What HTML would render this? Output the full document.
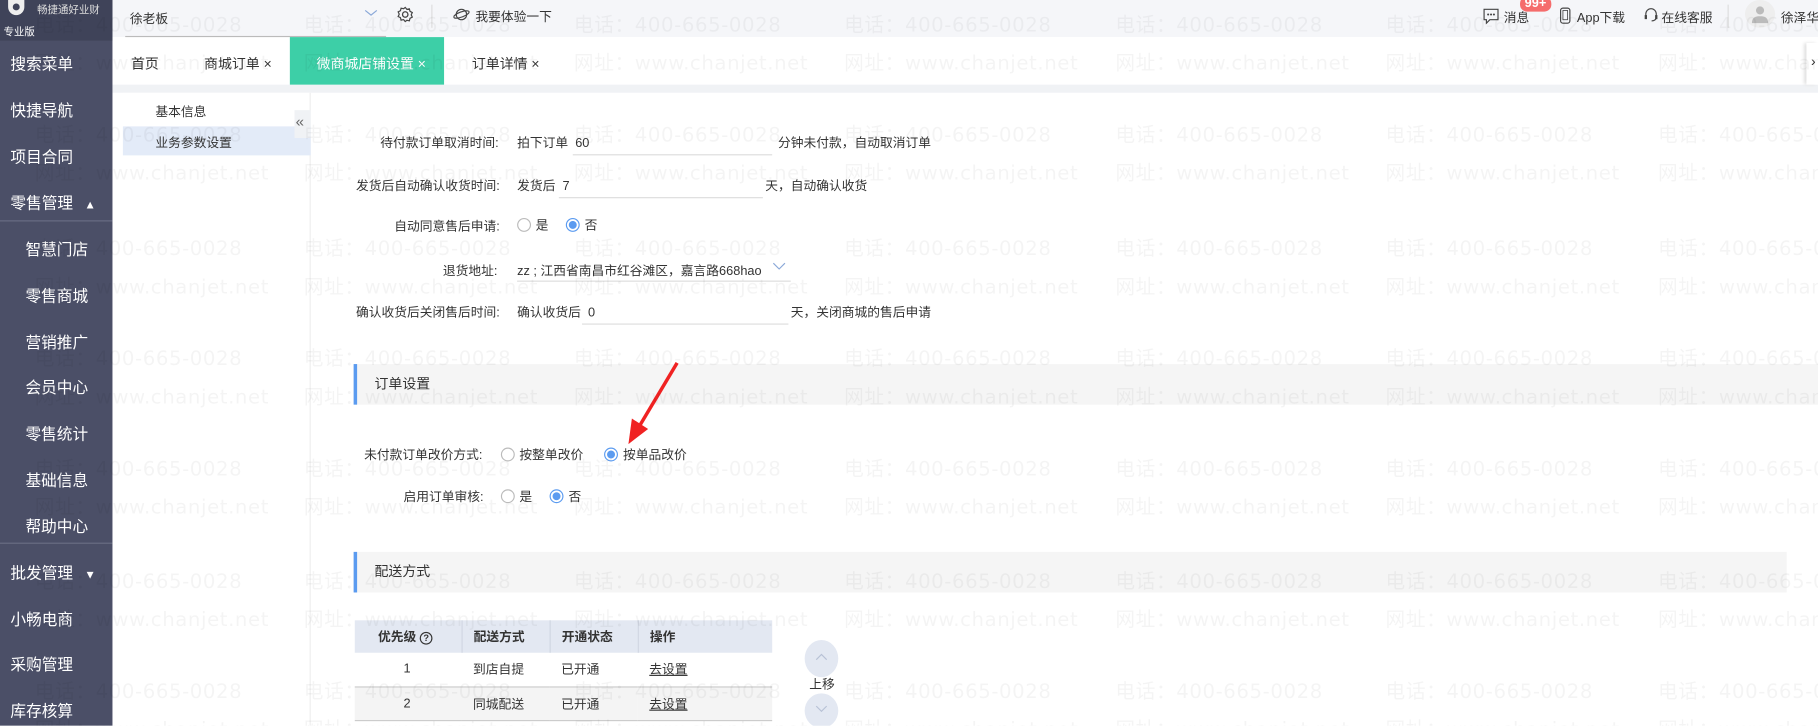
<!DOCTYPE html>
<html><head><meta charset="utf-8"><style>
*{margin:0;padding:0;box-sizing:border-box}
html,body{width:1818px;height:726px;overflow:hidden;background:#fff}
#w{position:absolute;left:0;top:0;width:1568px;height:626px;transform:scale(1.15944);transform-origin:0 0;font-family:"Liberation Sans","Noto Sans CJK SC",sans-serif;color:#333;font-size:11px;overflow:hidden}
.a{position:absolute;white-space:nowrap}
.side{position:absolute;left:0;top:0;width:97px;height:626px;background:#4b4f67;color:#fff}
.side .a{font-size:13.5px}
.top{position:absolute;left:97px;top:0;right:0;height:32px;background:#f5f6f9}
.tabs{position:absolute;left:97px;top:32px;right:0;height:41px;background:#fff}
.strip{position:absolute;left:97px;top:73px;right:0;height:7px;background:#f0f2f5}
.sub{position:absolute;left:106px;top:80px;width:162px;height:546px;background:#fff;border-right:1px solid #eee}
#wms{position:absolute;left:0;top:0;width:1568px;height:626px;z-index:5;pointer-events:none}
.wm{position:absolute;color:rgba(0,0,0,0.045);font-family:"DejaVu Sans","Noto Sans CJK SC",sans-serif;font-size:17px;white-space:nowrap;line-height:20px;letter-spacing:0.5px}
.radio{display:inline-block;width:12px;height:12px;border:1px solid #bbb;border-radius:50%;vertical-align:-2px;margin-right:4px;background:#fff}
.radio.on{border-color:#5b9bf0;background:radial-gradient(circle,#5b9bf0 3.2px,#fff 3.6px)}
.inp{position:absolute;border-bottom:1px solid #ddd;height:22px}
.sec{position:absolute;left:305px;height:35px;background:#f5f5f5;border-left:3px solid #5b9bf0;font-size:12px;line-height:35px;padding-left:15px}
table{position:absolute;left:306px;top:535px;width:360px;border-collapse:collapse;font-size:11px}
th{background:#e3e8f2;height:28px;font-weight:bold;text-align:left;padding-left:10px;border-right:1px solid #d0d6e2}
td{height:29px;padding-left:10px;border-bottom:1px solid #ccc}
</style></head><body><div id="w">
<div class="top"></div>
<div class="tabs"></div>
<div class="strip"></div>
<div class="sub"></div>

<div class="side">
<div style="position:absolute;left:0;top:0;width:97px;height:35px;background:#3f4359"></div>
<svg class="a" style="left:5px;top:0" width="18" height="16" viewBox="0 0 18 16"><path d="M2 0h14v6a7 7 0 0 1-14 0z" fill="#eee"/><circle cx="9" cy="6" r="3" fill="#3f4359"/></svg>
<div class="a" style="left:32px;top:1px;font-size:9px!important;color:#ddd">畅捷通好业财</div>
<div class="a" style="left:3px;top:20px;font-size:9px!important">专业版</div>
<div class="a" style="left:9px;top:44px">搜索菜单</div>
<div class="a" style="left:9px;top:84px">快捷导航</div>
<div class="a" style="left:9px;top:124px">项目合同</div>
<div class="a" style="left:9px;top:164px">零售管理 <span style="font-size:10px;margin-left:6px">▲</span></div>
<div style="position:absolute;left:0;top:190px;width:97px;height:1px;background:#6a6e84"></div>
<div class="a" style="left:22px;top:204px">智慧门店</div>
<div class="a" style="left:22px;top:244px">零售商城</div>
<div class="a" style="left:22px;top:284px">营销推广</div>
<div class="a" style="left:22px;top:323px">会员中心</div>
<div class="a" style="left:22px;top:363px">零售统计</div>
<div class="a" style="left:22px;top:403px">基础信息</div>
<div class="a" style="left:22px;top:443px">帮助中心</div>
<div style="position:absolute;left:0;top:468px;width:97px;height:1px;background:#6a6e84"></div>
<div class="a" style="left:9px;top:483px">批发管理 <span style="font-size:10px;margin-left:6px">▼</span></div>
<div class="a" style="left:9px;top:523px">小畅电商</div>
<div class="a" style="left:9px;top:562px">采购管理</div>
<div class="a" style="left:9px;top:602px">库存核算</div>
</div>

<div class="a" style="left:112px;top:8px;font-size:11px">徐老板</div>
<div style="position:absolute;left:108px;top:31px;width:225px;height:1px;background:#bbb"></div>
<svg class="a" style="left:314px;top:6px" width="12" height="10"><path d="M1 3l5 4 5-4" stroke="#8aa8d8" fill="none"/></svg>
<svg class="a" style="left:342px;top:5px" width="15" height="15" viewBox="0 0 16 16"><circle cx="8" cy="8" r="2.5" fill="none" stroke="#444" stroke-width="1.2"/><path d="M8 1.5l1.5 1.8 2.3-.5.6 2.3 2.1 1.1-1 2.1 1 2.1-2.1 1.1-.6 2.3-2.3-.5L8 14.5l-1.5-1.8-2.3.5-.6-2.3-2.1-1.1 1-2.1-1-2.1 2.1-1.1.6-2.3 2.3.5z" fill="none" stroke="#444" stroke-width="1.1"/></svg>
<div style="position:absolute;left:372px;top:4px;width:1px;height:20px;background:#ddd"></div>
<svg class="a" style="left:391px;top:6px" width="14" height="13" viewBox="0 0 14 13"><circle cx="7" cy="6.5" r="4.5" fill="none" stroke="#444"/><ellipse cx="7" cy="6.5" rx="7" ry="2.2" transform="rotate(-20 7 6.5)" fill="none" stroke="#444"/></svg>
<div class="a" style="left:410px;top:6px">我要体验一下</div>
<svg class="a" style="left:1279px;top:7px" width="14" height="14" viewBox="0 0 14 14"><path d="M1 1h12v9H6l-3 3v-3H1z" fill="none" stroke="#444"/><circle cx="4.5" cy="5.5" r=".9" fill="#444"/><circle cx="7" cy="5.5" r=".9" fill="#444"/><circle cx="9.5" cy="5.5" r=".9" fill="#444"/></svg>
<div class="a" style="left:1297px;top:7px">消息</div>
<div class="a" style="left:1311px;top:-3px;background:#f56c6c;color:#fff;font-size:11px;font-weight:bold;padding:0 4px;border-radius:6px;line-height:13px">99+</div>
<svg class="a" style="left:1345px;top:6px" width="10" height="15"><rect x="1" y="1" width="8" height="13" rx="2" fill="none" stroke="#444"/><rect x="3" y="3" width="4" height="8" fill="none" stroke="#444" stroke-width=".7"/></svg>
<div class="a" style="left:1360px;top:7px">App下载</div>
<svg class="a" style="left:1418px;top:6px" width="12" height="14" viewBox="0 0 12 14"><path d="M1.5 8V6a4.5 4.5 0 0 1 9 0v2M10.5 9c0 2-2 3-4 3" fill="none" stroke="#444"/><rect x=".5" y="7" width="2" height="3.5" fill="#444"/><rect x="9.5" y="7" width="2" height="3.5" fill="#444"/></svg>
<div class="a" style="left:1433px;top:7px">在线客服</div>
<div style="position:absolute;left:1490px;top:4px;width:1px;height:20px;background:#ddd"></div>
<div style="position:absolute;left:1505px;top:0;width:26px;height:24px;border-radius:50%;background:#eee"></div>
<svg class="a" style="left:1510px;top:4px" width="16" height="16"><circle cx="8" cy="5" r="3.5" fill="#bbb"/><path d="M1 16c0-5 3-6 7-6s7 1 7 6z" fill="#bbb"/></svg>
<div class="a" style="left:1536px;top:7px">徐泽华</div>

<div class="a" style="left:113px;top:46px;font-size:12px">首页</div>
<div class="a" style="left:176px;top:46px;font-size:12px">商城订单 ×</div>
<div style="position:absolute;left:250px;top:32px;width:133px;height:41px;background:#3dcfa7"></div>
<div class="a" style="left:273px;top:46px;font-size:12px;color:#fff">微商城店铺设置 ×</div>
<div class="a" style="left:407px;top:46px;font-size:12px">订单详情 ×</div>
<div style="position:absolute;left:1558px;top:37px;width:10px;height:36px;background:#fff;box-shadow:-2px 0 3px #ddd"></div>
<div class="a" style="left:1562px;top:46px;font-size:12px">›</div>

<div class="a" style="left:134px;top:88px">基本信息</div>
<div style="position:absolute;left:106px;top:109px;width:162px;height:25px;background:#e3ebf8"></div>
<div class="a" style="left:134px;top:115px">业务参数设置</div>
<div style="position:absolute;left:254px;top:95px;width:14px;height:24px;background:#f0f2f5"></div>
<div class="a" style="left:255px;top:97px;font-size:13px;color:#666">«</div>

<div class="a" style="left:328px;top:115px">待付款订单取消时间:</div>
<div class="a" style="left:446px;top:115px">拍下订单&nbsp; 60</div>
<div class="inp" style="left:494px;top:112px;width:172px"></div>
<div class="a" style="left:671px;top:115px">分钟未付款，自动取消订单</div>

<div class="a" style="left:307px;top:152px">发货后自动确认收货时间:</div>
<div class="a" style="left:446px;top:152px">发货后&nbsp; 7</div>
<div class="inp" style="left:482px;top:149px;width:176px"></div>
<div class="a" style="left:660px;top:152px">天，自动确认收货</div>

<div class="a" style="left:340px;top:187px">自动同意售后申请:</div>
<div class="a" style="left:446px;top:186px"><span class="radio"></span>是&nbsp;&nbsp;&nbsp;&nbsp;&nbsp;<span class="radio on"></span>否</div>

<div class="a" style="left:382px;top:225px">退货地址:</div>
<div class="a" style="left:446px;top:225px">zz ; 江西省南昌市红谷滩区，嘉言路668hao</div>
<svg class="a" style="left:666px;top:226px" width="12" height="8"><path d="M1 1l5 5 5-5" stroke="#8aa8d8" fill="none"/></svg>
<div class="inp" style="left:446px;top:221px;width:236px"></div>

<div class="a" style="left:307px;top:261px">确认收货后关闭售后时间:</div>
<div class="a" style="left:446px;top:261px">确认收货后&nbsp; 0</div>
<div class="inp" style="left:502px;top:258px;width:178px"></div>
<div class="a" style="left:682px;top:261px">天，关闭商城的售后申请</div>

<div class="sec" style="top:314px;right:0">订单设置</div>
<div class="a" style="left:314px;top:384px">未付款订单改价方式:</div>
<div class="a" style="left:432px;top:384px"><span class="radio"></span>按整单改价&nbsp;&nbsp;&nbsp;&nbsp;&nbsp;&nbsp;<span class="radio on"></span>按单品改价</div>
<div class="a" style="left:348px;top:420px">启用订单审核:</div>
<div class="a" style="left:432px;top:420px"><span class="radio"></span>是&nbsp;&nbsp;&nbsp;&nbsp;&nbsp;<span class="radio on"></span>否</div>
<svg class="a" style="left:530px;top:310px" width="60" height="80"><path d="M54 3L20 60" stroke="#f02222" stroke-width="3"/><path d="M12 73l3-22 14 9z" fill="#f02222"/></svg>

<div class="sec" style="top:476px;width:1236px">配送方式</div>
<table>
<tr><th style="width:92px;padding-left:20px">优先级 <span style="display:inline-block;width:11px;height:11px;border:1px solid #333;border-radius:50%;font-size:8px;text-align:center;line-height:9px">?</span></th><th style="width:76px">配送方式</th><th style="width:76px">开通状态</th><th style="border:none">操作</th></tr>
<tr><td style="padding-left:42px">1</td><td>到店自提</td><td>已开通</td><td><u>去设置</u></td></tr>
<tr style="background:#f4f4f4"><td style="padding-left:42px">2</td><td>同城配送</td><td>已开通</td><td><u>去设置</u></td></tr>
</table>
<div style="position:absolute;left:694px;top:552px;width:29px;height:32px;border-radius:50%;background:#e3e8f2"></div>
<svg class="a" style="left:703px;top:563px" width="11" height="7"><path d="M1 6l4.5-4.5L10 6" stroke="#b8c2d6" fill="none"/></svg>
<div class="a" style="left:698px;top:582px">上移</div>
<div style="position:absolute;left:694px;top:598px;width:29px;height:30px;border-radius:50%;background:#e3e8f2"></div>
<svg class="a" style="left:703px;top:608px" width="11" height="7"><path d="M1 1l4.5 4.5L10 1" stroke="#b8c2d6" fill="none"/></svg>
<div id="wms"></div>
</div>
<script>
var h='';var xs=[30,262,495,728,962,1195,1430];var ys=[12,107,205,300,395,492,587];
for(var i=0;i<ys.length;i++)for(var j=0;j<xs.length;j++){h+='<div class="wm" style="left:'+xs[j]+'px;top:'+ys[i]+'px">电话：400-665-0028</div><div class="wm" style="left:'+xs[j]+'px;top:'+(ys[i]+33)+'px">网址：www.chanjet.net</div>';}
document.getElementById('wms').innerHTML=h;
</script>
</body></html>
